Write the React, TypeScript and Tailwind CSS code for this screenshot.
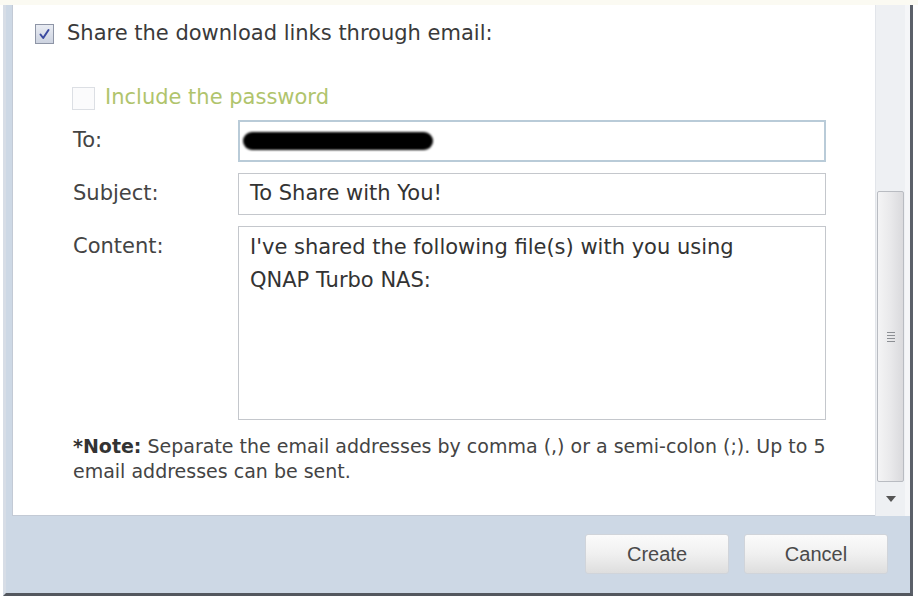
import React from "react";

const font = { fontFamily: "'DejaVu Sans', Verdana, sans-serif" };

function Checkbox({ checked, faded }: { checked?: boolean; faded?: boolean }) {
  return (
    <div
      className={
        faded
          ? "w-[23px] h-[23px] border border-[#dcdfe4] bg-[#fbfbfc]"
          : "w-[19px] h-[20px] border border-[#8e95a6] bg-gradient-to-b from-[#e9ecf3] to-[#cdd3e0] flex items-center justify-center"
      }
    >
      {checked && (
        <svg width="13" height="13" viewBox="0 0 13 13">
          <path d="M2.5 6.5 L5.2 10 L10.5 2" fill="none" stroke="#3b4aa0" strokeWidth="2" strokeLinecap="round" strokeLinejoin="round" />
        </svg>
      )}
    </div>
  );
}

export default function App() {
  return (
    <div className="w-[918px] h-[599px] bg-white overflow-hidden" style={font}>
      <div className="h-[5px] bg-[#fbfaf2]" />
      <div className="ml-[3px] w-[910px] h-[591px] flex flex-col border-l-[3px] border-l-[#d7dde6] border-r-[3px] border-r-[#5b6069] border-b-[3px] border-b-[#53575e] bg-[#cdd8e5]">
        <div className="h-[511px] flex pl-[6px]">
          <div className="flex-1 bg-white border-l border-b border-[#c3cad5] flex flex-col">
            <div className="flex items-center h-[30px] mt-[14px] ml-[22px]">
              <Checkbox checked />
              <span className="ml-[13px] text-[21px] text-[#3a3a3a]">Share the download links through email:</span>
            </div>
            <div className="flex items-center h-[30px] mt-[34px] ml-[59px]">
              <Checkbox faded />
              <span className="ml-[10px] text-[21px] text-[#b0c46c]">Include the password</span>
            </div>
            <div className="flex items-center mt-[7px] ml-[60px]">
              <span className="w-[165px] text-[21px] text-[#444]">To:</span>
              <div className="w-[588px] h-[42px] border-2 border-[#b9cbd8] bg-white flex items-center pl-[3px]">
                <div className="w-[190px] h-[18px] rounded-full bg-black blur-[1px]" />
              </div>
            </div>
            <div className="flex items-center mt-[11px] ml-[60px]">
              <span className="w-[165px] text-[21px] text-[#444]">Subject:</span>
              <div className="w-[588px] h-[42px] border border-[#c4c7cc] bg-white flex items-center pl-[11px] text-[21px] text-[#333]">
                To Share with You!
              </div>
            </div>
            <div className="flex items-start mt-[11px] ml-[60px]">
              <span className="w-[165px] text-[21px] leading-[33px] text-[#444] pt-[4px]">Content:</span>
              <div className="w-[588px] h-[194px] border border-[#c4c7cc] bg-white pl-[11px] pt-[4px] text-[21px] leading-[33px] text-[#333]">
                I've shared the following file(s) with you using
                <br />
                QNAP Turbo NAS:
              </div>
            </div>
            <div className="mt-[14px] ml-[60px] w-[770px] text-[19px] leading-[25px] text-[#444]">
              <span className="font-bold text-[#333]">*Note:</span> Separate the email addresses by comma (,) or a semi-colon (;). Up to 5 email addresses can be sent.
            </div>
          </div>
          <div className="w-[35px] flex">
            <div className="w-[30px] bg-[#eef0f3] flex flex-col border-l border-[#e2e5ea]">
              <div className="h-[186px]" />
              <div className="h-[291px] mx-[1px] rounded-[2px] border border-[#b9bcc2] bg-gradient-to-r from-[#f4f4f5] via-[#e9e9eb] to-[#dadadd] flex items-center justify-center">
                <div className="flex flex-col gap-[2px]">
                  <div className="w-[8px] h-[1px] bg-[#8c8f94]" />
                  <div className="w-[8px] h-[1px] bg-[#8c8f94]" />
                  <div className="w-[8px] h-[1px] bg-[#8c8f94]" />
                  <div className="w-[8px] h-[1px] bg-[#8c8f94]" />
                </div>
              </div>
              <div className="flex-1 flex items-center justify-center">
                <svg width="10" height="6" viewBox="0 0 10 6">
                  <path d="M0 0 L10 0 L5 6 Z" fill="#555" />
                </svg>
              </div>
            </div>
            <div className="flex-1 bg-[#f5f6f8]" />
          </div>
        </div>
        <div className="flex-1 flex justify-end items-start pt-[18px] pr-[22px] gap-[15px]" style={{ fontFamily: "'Liberation Sans', Arial, sans-serif" }}>
          <button className="w-[144px] h-[40px] rounded-[3px] border border-[#d0d4da] bg-gradient-to-b from-[#fbfbfb] via-[#f0f0f0] to-[#dedede] text-[20px] text-[#4a4a4a]">
            Create
          </button>
          <button className="w-[144px] h-[40px] rounded-[3px] border border-[#d0d4da] bg-gradient-to-b from-[#fbfbfb] via-[#f0f0f0] to-[#dedede] text-[20px] text-[#4a4a4a]">
            Cancel
          </button>
        </div>
      </div>
    </div>
  );
}
